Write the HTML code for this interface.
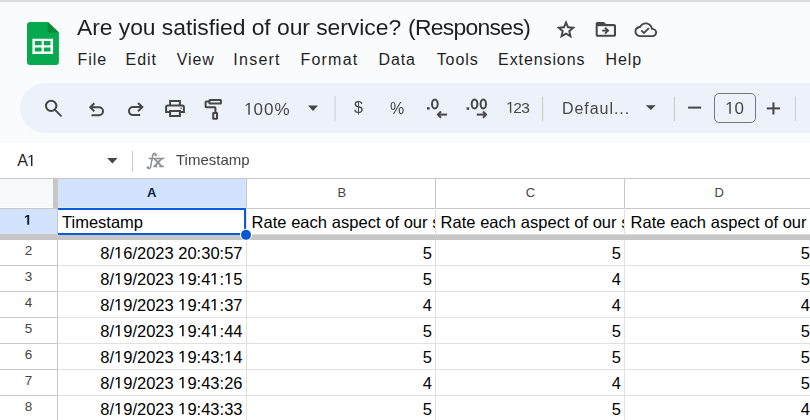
<!DOCTYPE html>
<html><head><meta charset="utf-8">
<style>
*{margin:0;padding:0;box-sizing:border-box}
html,body{width:810px;height:420px;overflow:hidden;background:#f9fbfd;font-family:"Liberation Sans",sans-serif}
body{position:relative}
.a{position:absolute;white-space:nowrap;line-height:1}
.menu{font-size:16px;color:#1f1f1f;top:52px;letter-spacing:0.9px}
.tbt{color:#444746;will-change:transform}
.gs{will-change:transform}
.cell{position:absolute;font-size:16.5px;color:#000;white-space:nowrap;overflow:hidden;line-height:1}
.o{display:inline-block;width:0.5562em;height:0.688em;vertical-align:baseline;fill:currentColor;overflow:visible}
.rn{position:absolute;font-size:13.5px;color:#444;width:57px;text-align:center;line-height:1}
</style></head><body>
<div class="a" style="left:0;top:0;width:810px;height:2px;background:#dadce0"></div>

<div class="a gs" style="left:77px;top:16.3px;font-size:22.9px;color:#1f1f1f;letter-spacing:-0.05px">Are you satisfied of our service?</div>
<div class="a gs" style="left:408px;top:16.3px;font-size:22.9px;color:#1f1f1f;letter-spacing:-0.7px">(Responses)</div>
<div class="a menu" style="left:77.6px;letter-spacing:0.9px">File</div>
<div class="a menu" style="left:125.6px;letter-spacing:0.9px">Edit</div>
<div class="a menu" style="left:176.7px;letter-spacing:0.9px">View</div>
<div class="a menu" style="left:233.3px;letter-spacing:1.25px">Insert</div>
<div class="a menu" style="left:300.5px;letter-spacing:1.2px">Format</div>
<div class="a menu" style="left:378.5px;letter-spacing:0.9px">Data</div>
<div class="a menu" style="left:436.7px;letter-spacing:0.9px">Tools</div>
<div class="a menu" style="left:498.1px;letter-spacing:0.9px">Extensions</div>
<div class="a menu" style="left:605.6px;letter-spacing:0.9px">Help</div>
<div class="a" style="left:20px;top:83px;width:840px;height:50px;border-radius:25px;background:#edf2fa"></div>
<div class="a tbt" style="left:244px;top:101px;font-size:17px;letter-spacing:1.1px"><svg class="o" viewBox="0 0 1139 1409"><path d="M515 1409V172L197 399V229L530 0H696V1409Z"/></svg>00%</div>
<div class="a tbt" style="left:353.5px;top:100px;font-size:16px">$</div>
<div class="a tbt" style="left:390px;top:101px;font-size:16px">%</div>
<div class="a tbt" style="left:505.5px;top:100px;font-size:15.5px"><svg class="o" viewBox="0 0 1139 1409"><path d="M515 1409V172L197 399V229L530 0H696V1409Z"/></svg><span style="margin-left:-1.3px;letter-spacing:-0.7px">23</span></div>
<div class="a tbt" style="left:561.5px;top:100.5px;font-size:16px;letter-spacing:0.95px">Defaul...</div>
<div class="a" style="left:714px;top:93px;width:42px;height:30px;border:1px solid #747775;border-radius:5px"></div>
<div class="a tbt" style="left:724.5px;top:100px;font-size:17px"><svg class="o" viewBox="0 0 1139 1409"><path d="M515 1409V172L197 399V229L530 0H696V1409Z"/></svg>0</div>
<div class="a" style="left:0;top:143px;width:810px;height:35px;background:#fff"></div>
<div class="a" style="left:17.3px;top:153px;font-size:16px;color:#1f1f1f;letter-spacing:-0.9px">A<svg class="o" viewBox="0 0 1139 1409"><path d="M515 1409V172L197 399V229L530 0H696V1409Z"/></svg></div>
<div class="a gs" style="left:176px;top:151.6px;font-size:15px;color:#444746">Timestamp</div>
<div class="a" style="left:0;top:178px;width:810px;height:242px;background:#fff"></div>
<div class="a" style="left:0;top:179px;width:53px;height:28px;background:#f8f9fa"></div>
<div class="a" style="left:58px;top:179px;width:188px;height:28px;background:#d3e3fd"></div>
<div class="a" style="left:0;top:209px;width:57px;height:25px;background:#d3e3fd"></div>
<div class="a" style="left:147px;top:186.3px;font-size:13px;font-weight:bold;color:#041e49">A</div>
<div class="a" style="left:337.5px;top:186.3px;font-size:13px;color:#444">B</div>
<div class="a" style="left:525.8px;top:186.3px;font-size:13px;color:#444">C</div>
<div class="a" style="left:714.6px;top:186.3px;font-size:13px;color:#444">D</div>
<div class="a" style="left:23.9px;top:213px;font-size:14px;font-weight:bold;color:#041e49"><svg class="o" viewBox="0 0 1139 1409"><path d="M478 1409V239L140 450V229L493 0H759V1409Z"/></svg></div>
<div class="cell" style="left:62px;top:214.4px;width:180px">Timestamp</div>
<div class="cell" style="left:251.5px;top:214.4px;width:183px;letter-spacing:0.04px">Rate each aspect of our service</div>
<div class="cell" style="left:440.5px;top:214.4px;width:183px;letter-spacing:0.04px">Rate each aspect of our service</div>
<div class="cell" style="left:630.5px;top:214.4px;width:178px;letter-spacing:0.04px">Rate each aspect of our service</div>
<div class="rn" style="left:0;top:244px">2</div>
<div class="cell" style="left:58px;top:244.7px;width:184.5px;text-align:right">8/<svg class="o" viewBox="0 0 1139 1409"><path d="M515 1409V172L197 399V229L530 0H696V1409Z"/></svg>6/2023 20:30:57</div>
<div class="cell" style="left:332px;top:244.7px;width:100px;text-align:right">5</div>
<div class="cell" style="left:521px;top:244.7px;width:100px;text-align:right">5</div>
<div class="cell" style="left:710px;top:244.7px;width:100px;text-align:right">5</div>
<div class="rn" style="left:0;top:270px">3</div>
<div class="cell" style="left:58px;top:270.7px;width:184.5px;text-align:right">8/<svg class="o" viewBox="0 0 1139 1409"><path d="M515 1409V172L197 399V229L530 0H696V1409Z"/></svg>9/2023 <svg class="o" viewBox="0 0 1139 1409"><path d="M515 1409V172L197 399V229L530 0H696V1409Z"/></svg>9:4<svg class="o" viewBox="0 0 1139 1409"><path d="M515 1409V172L197 399V229L530 0H696V1409Z"/></svg>:<svg class="o" viewBox="0 0 1139 1409"><path d="M515 1409V172L197 399V229L530 0H696V1409Z"/></svg>5</div>
<div class="cell" style="left:332px;top:270.7px;width:100px;text-align:right">5</div>
<div class="cell" style="left:521px;top:270.7px;width:100px;text-align:right">4</div>
<div class="cell" style="left:710px;top:270.7px;width:100px;text-align:right">5</div>
<div class="rn" style="left:0;top:296px">4</div>
<div class="cell" style="left:58px;top:296.7px;width:184.5px;text-align:right">8/<svg class="o" viewBox="0 0 1139 1409"><path d="M515 1409V172L197 399V229L530 0H696V1409Z"/></svg>9/2023 <svg class="o" viewBox="0 0 1139 1409"><path d="M515 1409V172L197 399V229L530 0H696V1409Z"/></svg>9:4<svg class="o" viewBox="0 0 1139 1409"><path d="M515 1409V172L197 399V229L530 0H696V1409Z"/></svg>:37</div>
<div class="cell" style="left:332px;top:296.7px;width:100px;text-align:right">4</div>
<div class="cell" style="left:521px;top:296.7px;width:100px;text-align:right">4</div>
<div class="cell" style="left:710px;top:296.7px;width:100px;text-align:right">4</div>
<div class="rn" style="left:0;top:322px">5</div>
<div class="cell" style="left:58px;top:322.7px;width:184.5px;text-align:right">8/<svg class="o" viewBox="0 0 1139 1409"><path d="M515 1409V172L197 399V229L530 0H696V1409Z"/></svg>9/2023 <svg class="o" viewBox="0 0 1139 1409"><path d="M515 1409V172L197 399V229L530 0H696V1409Z"/></svg>9:4<svg class="o" viewBox="0 0 1139 1409"><path d="M515 1409V172L197 399V229L530 0H696V1409Z"/></svg>:44</div>
<div class="cell" style="left:332px;top:322.7px;width:100px;text-align:right">5</div>
<div class="cell" style="left:521px;top:322.7px;width:100px;text-align:right">5</div>
<div class="cell" style="left:710px;top:322.7px;width:100px;text-align:right">5</div>
<div class="rn" style="left:0;top:348px">6</div>
<div class="cell" style="left:58px;top:348.7px;width:184.5px;text-align:right">8/<svg class="o" viewBox="0 0 1139 1409"><path d="M515 1409V172L197 399V229L530 0H696V1409Z"/></svg>9/2023 <svg class="o" viewBox="0 0 1139 1409"><path d="M515 1409V172L197 399V229L530 0H696V1409Z"/></svg>9:43:<svg class="o" viewBox="0 0 1139 1409"><path d="M515 1409V172L197 399V229L530 0H696V1409Z"/></svg>4</div>
<div class="cell" style="left:332px;top:348.7px;width:100px;text-align:right">5</div>
<div class="cell" style="left:521px;top:348.7px;width:100px;text-align:right">5</div>
<div class="cell" style="left:710px;top:348.7px;width:100px;text-align:right">5</div>
<div class="rn" style="left:0;top:374px">7</div>
<div class="cell" style="left:58px;top:374.7px;width:184.5px;text-align:right">8/<svg class="o" viewBox="0 0 1139 1409"><path d="M515 1409V172L197 399V229L530 0H696V1409Z"/></svg>9/2023 <svg class="o" viewBox="0 0 1139 1409"><path d="M515 1409V172L197 399V229L530 0H696V1409Z"/></svg>9:43:26</div>
<div class="cell" style="left:332px;top:374.7px;width:100px;text-align:right">4</div>
<div class="cell" style="left:521px;top:374.7px;width:100px;text-align:right">4</div>
<div class="cell" style="left:710px;top:374.7px;width:100px;text-align:right">5</div>
<div class="rn" style="left:0;top:400px">8</div>
<div class="cell" style="left:58px;top:400.7px;width:184.5px;text-align:right">8/<svg class="o" viewBox="0 0 1139 1409"><path d="M515 1409V172L197 399V229L530 0H696V1409Z"/></svg>9/2023 <svg class="o" viewBox="0 0 1139 1409"><path d="M515 1409V172L197 399V229L530 0H696V1409Z"/></svg>9:43:33</div>
<div class="cell" style="left:332px;top:400.7px;width:100px;text-align:right">5</div>
<div class="cell" style="left:521px;top:400.7px;width:100px;text-align:right">5</div>
<div class="cell" style="left:710px;top:400.7px;width:100px;text-align:right">4</div>
<svg class="a" style="left:0;top:0" width="810" height="420" viewBox="0 0 810 420"><path d="M30 22H47.9L58.9 32.6V62a3 3 0 0 1-3 3H30a3 3 0 0 1-3-3V25a3 3 0 0 1 3-3z" fill="#06a94d"/><path d="M47.9 22L58.9 32.6H47.9z" fill="#078a36"/><path fill="#fff" fill-rule="evenodd" d="M32.4 38.8H53.1V53.9H32.4z M34.9 41.1V45.2H41.6V41.1z M43.9 41.1V45.2H50.5V41.1z M34.9 47.4V51.4H41.6V47.4z M43.9 47.4V51.4H50.5V47.4z"/><svg x="554.5" y="18.1" width="23" height="23" viewBox="0 -960 960 960"><path fill="#444746" d="m354-287 126-76 126 77-33-144 111-96-146-13-58-136-58 135-146 13 111 97-33 143ZM233-120l65-281L80-590l288-25 112-265 112 265 288 25-218 189 65 281-247-149-247 149Z"/></svg><path fill="#444746" d="M597.5 22h6.5l2 2h8c1 0 2 .9 2 2v9c0 1-.9 1.8-2 1.8H597.5c-1 0-1.8-.8-1.8-1.8V23.8c0-1 .8-1.8 1.8-1.8z"/><path fill="#f9fbfd" d="M597.7 26.2h16.2v8.6H597.7z"/><g fill="none" stroke="#444746" stroke-width="1.9"><path d="M602.2 30.6H608.3"/><path d="M605 27.6L608 30.6L605 33.6"/></g><g transform="translate(634.5 18.7) scale(0.94 0.92)"><path fill="#444746" d="M19.35 10.04C18.67 6.59 15.64 4 12 4 9.11 4 6.6 5.64 5.35 8.04 2.34 8.36 0 10.91 0 14c0 3.31 2.69 6 6 6h13c2.76 0 5-2.24 5-5 0-2.64-2.05-4.78-4.65-4.96zM19 18H6c-2.21 0-4-1.79-4-4 0-2.05 1.53-3.76 3.56-3.97l1.07-.11.5-.95C8.08 7.14 9.94 6 12 6c2.62 0 4.88 1.86 5.39 4.430l.3 1.5 1.53.11c1.56.1 2.78 1.41 2.78 2.96 0 1.65-1.35 3-3 3zm-9-3.82l-2.09-2.09L6.5 13.5 10 17l6.01-6.01-1.41-1.41z"/></g><g fill="none" stroke="#444746"><circle cx="51.15" cy="105.85" r="5.2" stroke-width="2"/><path d="M55 109.8L61 115.8" stroke-width="1.9" stroke-linecap="round"/></g><g fill="none" stroke="#444746" stroke-width="2"><path d="M94.3 103.2L90.3 107.3L94.3 111.4"/><path d="M90.3 107.3H99a4 4 0 0 1 0 8H91.5"/></g><g fill="none" stroke="#444746" stroke-width="2"><path d="M138 103L142.3 107.1L138 111.2"/><path d="M142.3 107.1H133a4 4 0 0 0 0 8H140.2"/></g><g fill="none" stroke="#444746" stroke-width="2"><path d="M170.1 105V101H179.9V105"/><path d="M170.1 112.1H166.1V107a1.6 1.6 0 0 1 1.6-1.6H182.3a1.6 1.6 0 0 1 1.6 1.6V112.1H179.9"/><path d="M170.1 111H179.9V116H170.1z"/></g><circle cx="181.1" cy="108.3" r="0.8" fill="#444746"/><g fill="none" stroke="#444746" stroke-width="2"><rect x="209.4" y="99.9" width="11.5" height="3.5" rx="0.5"/><path stroke-linejoin="round" d="M209.4 101.6H206.2a0.6 0.6 0 0 0-0.6 0.6V106.6a0.6 0.6 0 0 0 0.6 0.6H214.8a0.6 0.6 0 0 1 0.6 0.6V112"/><rect x="213.2" y="113" width="3.8" height="5.8" rx="0.3"/></g><path d="M308 105.6h10l-5 5.4z" fill="#444746"/><rect x="334.5" y="96" width="1" height="25" fill="#c7c7c7"/><rect x="542.1" y="96.6" width="1" height="24.400000000000006" fill="#c7c7c7"/><rect x="673.9" y="96.6" width="1" height="24.400000000000006" fill="#c7c7c7"/><rect x="794.8" y="96.6" width="1" height="24.400000000000006" fill="#c7c7c7"/><rect x="427" y="107.1" width="2.6" height="2.5" fill="#444746"/><ellipse cx="434.85" cy="104.05" rx="2.85" ry="4.55" fill="none" stroke="#444746" stroke-width="2"/><g fill="none" stroke="#444746" stroke-width="2"><path d="M447 114.6H438.5"/><path d="M441 111.5L438 114.6L441 117.7"/></g><rect x="466.6" y="107.3" width="2.6" height="2.5" fill="#444746"/><ellipse cx="474.55" cy="104.05" rx="2.85" ry="4.55" fill="none" stroke="#444746" stroke-width="2"/><ellipse cx="483.3" cy="104.05" rx="2.7" ry="4.55" fill="none" stroke="#444746" stroke-width="2"/><g fill="none" stroke="#444746" stroke-width="2"><path d="M476.8 114.6H485.4"/><path d="M483 111.5L486 114.6L483 117.7"/></g><path d="M645.8 105.2h10l-5 4.9z" fill="#444746"/><rect x="688.1" y="106.6" width="13" height="2" fill="#444746"/><rect x="766.8" y="107.4" width="13.3" height="2" fill="#444746"/><rect x="772.45" y="102.4" width="2" height="12.1" fill="#444746"/><path d="M107.2 157.9h10.3l-5.15 5.7z" fill="#444746"/><rect x="132.1" y="151" width="1" height="21" fill="#c7c7c7"/><g fill="none" stroke="#8e9092" stroke-linecap="round"><path stroke-width="1.5" d="M148 168.3C149.6 169 150.4 168 150.7 166.3L152.6 156C153 154 154 153.2 155.2 153.4"/><path stroke-width="1.3" d="M149.2 158.5H163.9"/><path stroke-width="1.9" stroke-linecap="butt" d="M154.6 158.8L161.8 166.6M161.3 158.8L154.4 166.6"/><path stroke-width="1.5" stroke-linecap="butt" d="M153.4 166.5H157.4M159.2 166.5H163.9"/></g><circle cx="155.7" cy="154.9" r="1.25" fill="#8e9092"/><circle cx="147.9" cy="167.4" r="1.2" fill="#8e9092"/><rect x="0" y="178" width="810" height="1" fill="#c7c7c7"/><rect x="0" y="208" width="810" height="1" fill="#c7c7c7"/><rect x="246" y="179" width="1" height="29" fill="#c7c7c7"/><rect x="435" y="179" width="1" height="29" fill="#c7c7c7"/><rect x="624" y="179" width="1" height="29" fill="#c7c7c7"/><rect x="246" y="208" width="1" height="212" fill="#e1e1e1"/><rect x="435" y="208" width="1" height="212" fill="#e1e1e1"/><rect x="624" y="208" width="1" height="212" fill="#e1e1e1"/><rect x="57" y="208" width="1" height="212" fill="#c7c7c7"/><rect x="53" y="179" width="5" height="29" fill="#c7c7c7"/><rect x="0" y="265" width="57" height="1" fill="#c7c7c7"/><rect x="58" y="265" width="752" height="1" fill="#e1e1e1"/><rect x="0" y="291" width="57" height="1" fill="#c7c7c7"/><rect x="58" y="291" width="752" height="1" fill="#e1e1e1"/><rect x="0" y="317" width="57" height="1" fill="#c7c7c7"/><rect x="58" y="317" width="752" height="1" fill="#e1e1e1"/><rect x="0" y="343" width="57" height="1" fill="#c7c7c7"/><rect x="58" y="343" width="752" height="1" fill="#e1e1e1"/><rect x="0" y="369" width="57" height="1" fill="#c7c7c7"/><rect x="58" y="369" width="752" height="1" fill="#e1e1e1"/><rect x="0" y="395" width="57" height="1" fill="#c7c7c7"/><rect x="58" y="395" width="752" height="1" fill="#e1e1e1"/><rect x="0" y="421" width="57" height="1" fill="#c7c7c7"/><rect x="58" y="421" width="752" height="1" fill="#e1e1e1"/><rect x="0" y="234" width="57" height="6" fill="#c7c7c7"/><rect x="57" y="234" width="753" height="1" fill="#dcdcdc"/><rect x="57" y="235" width="753" height="5" fill="#c7c7c7"/><rect x="58" y="207" width="188" height="1" fill="#e2ebfb"/><rect x="58" y="208" width="188" height="2" fill="#0b5cdc"/><rect x="58" y="233" width="188" height="2" fill="#0b5cdc"/><rect x="244" y="208" width="2" height="27" fill="#0b5cdc"/><circle cx="246" cy="234.85" r="6" fill="#fff"/><circle cx="246" cy="234.85" r="5" fill="#0b57d0"/></svg>
</body></html>
